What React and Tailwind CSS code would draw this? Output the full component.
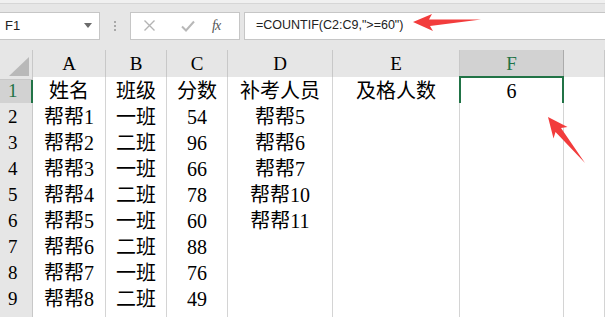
import React from 'react';

// column widths incl. right gridline
const COLS = 'grid-cols-[33px_73px_61px_61px_105px_127px_104px_1fr]';

const ROWS = [
  ['姓名', '班级', '分数', '补考人员', '及格人数', '6'],
  ['帮帮1', '一班', '54', '帮帮5', '', ''],
  ['帮帮2', '二班', '96', '帮帮6', '', ''],
  ['帮帮3', '一班', '66', '帮帮7', '', ''],
  ['帮帮4', '二班', '78', '帮帮10', '', ''],
  ['帮帮5', '一班', '60', '帮帮11', '', ''],
  ['帮帮6', '二班', '88', '', '', ''],
  ['帮帮7', '一班', '76', '', '', ''],
  ['帮帮8', '二班', '49', '', '', ''],
  ['', '', '', '', '', ''],
];

const serif = { fontFamily: '"Liberation Serif", "Noto Sans CJK SC", serif' };

const Toolbar = () => (
  <div className="bg-[#e6e6e6]">
    <div className="h-[4px] bg-[#f0f0f0] border-b border-[#d6d6d6]" />
    <div className="flex items-center h-[46px] pb-[3px]">
      {/* name box */}
      <div className="w-[100px] h-[28px] bg-white border border-l-0 border-[#c6c6c6] flex items-center justify-between pl-[5px] pr-[7px] font-['Liberation_Sans',sans-serif] text-[13px] text-[#222]">
        <span>F1</span>
        <svg width="8" height="5" viewBox="0 0 8 5"><path d="M0 0h8L4 5z" fill="#6b6b6b" /></svg>
      </div>
      <div className="w-[30px] flex flex-col items-center gap-[2px]">
        <span className="w-[2px] h-[2px] bg-[#a8a8a8]" />
        <span className="w-[2px] h-[2px] bg-[#a8a8a8]" />
        <span className="w-[2px] h-[2px] bg-[#a8a8a8]" />
      </div>
      {/* cancel / enter / fx */}
      <div className="w-[110px] h-[28px] bg-white border border-[#c6c6c6] flex items-center pl-[12px]">
        <svg width="13" height="13" viewBox="0 0 13 13" className="mr-[25px]">
          <path d="M1.5 1.5l10 10M11.5 1.5l-10 10" stroke="#b4b4b4" strokeWidth="1.4" />
        </svg>
        <svg width="14" height="12" viewBox="0 0 14 12" className="mr-[17px]">
          <path d="M1 6.5l4 4L13 1.5" stroke="#b8b8b8" strokeWidth="2" fill="none" />
        </svg>
        <span className="italic font-['Liberation_Serif',serif] text-[14px] text-[#555] tracking-[-1px]">fx</span>
      </div>
      <div className="flex-1 ml-[4px] h-[28px] bg-white border border-r-0 border-[#c6c6c6] flex items-center pl-[11px] font-['Liberation_Sans',sans-serif] text-[12.5px] text-[#222]">
        =COUNTIF(C2:C9,"&gt;=60")
      </div>
    </div>
  </div>
);

const HeaderRow = () => (
  <div className={`grid ${COLS} h-[27px]`}>
    <div className="relative bg-[#e6e6e6] border-r border-b border-[#c8c8c8]">
      <svg width="20" height="19" viewBox="0 0 20 19" className="absolute right-[3px] bottom-[3px]">
        <path d="M20 0V19H0z" fill="#b9b9b9" />
      </svg>
    </div>
    {['A', 'B', 'C', 'D', 'E', 'F', ''].map((c) => (
      <div
        key={c || 'G'}
        style={serif}
        className={`flex items-center justify-center text-[19px] border-r border-b ${
          c === 'F'
            ? 'bg-[#d2d2d2] text-[#217346] border-[#ababab]'
            : 'bg-[#e6e6e6] text-black border-[#c8c8c8]'
        }`}
      >
        {c}
      </div>
    ))}
  </div>
);

const Row = ({ n, cells }) => (
  <div className={`grid ${COLS} h-[26px]`}>
    <div
      style={serif}
      className={`flex items-center pl-[8px] text-[19px] border-b border-[#c8c8c8] ${
        n === 1
          ? 'bg-[#d2d2d2] text-[#217346] border-r-2 border-r-[#217346]'
          : 'bg-[#e6e6e6] text-black border-r border-r-[#c8c8c8]'
      }`}
    >
      {n < 10 ? n : ''}
    </div>
    {[...cells, ''].map((v, i) => (
      <div
        key={i}
        style={serif}
        className="relative flex items-center justify-center text-[20px] text-black bg-white border-r border-b border-[#d4d4d4] leading-none"
      >
        {v}
        {n === 1 && i === 5 && (
          <>
            <div className="absolute -left-[1px] -top-[1px] -right-[1px] -bottom-[1px] border-2 border-[#217346]" />
            <div className="absolute -right-[4px] -bottom-[4px] w-[6px] h-[6px] bg-[#217346] border border-white" />
          </>
        )}
      </div>
    ))}
  </div>
);

export default function App() {
  return (
    <div className="relative w-[605px] h-[317px] overflow-hidden bg-white">
      <Toolbar />
      <HeaderRow />
      {ROWS.map((r, i) => (
        <Row key={i} n={i + 1} cells={r} />
      ))}
      {/* red annotation arrows */}
      <svg width="605" height="317" className="absolute left-0 top-0 pointer-events-none">
        <path d="M413 22 L432 14 L429 19.5 L481 19.5 L430 26 L433 31 Z" fill="#f23c3c" />
        <path d="M548 117 L567.5 127 L561 128 L585 163 L555.5 132 L553.5 138.5 Z" fill="#f23c3c" />
      </svg>
    </div>
  );
}
